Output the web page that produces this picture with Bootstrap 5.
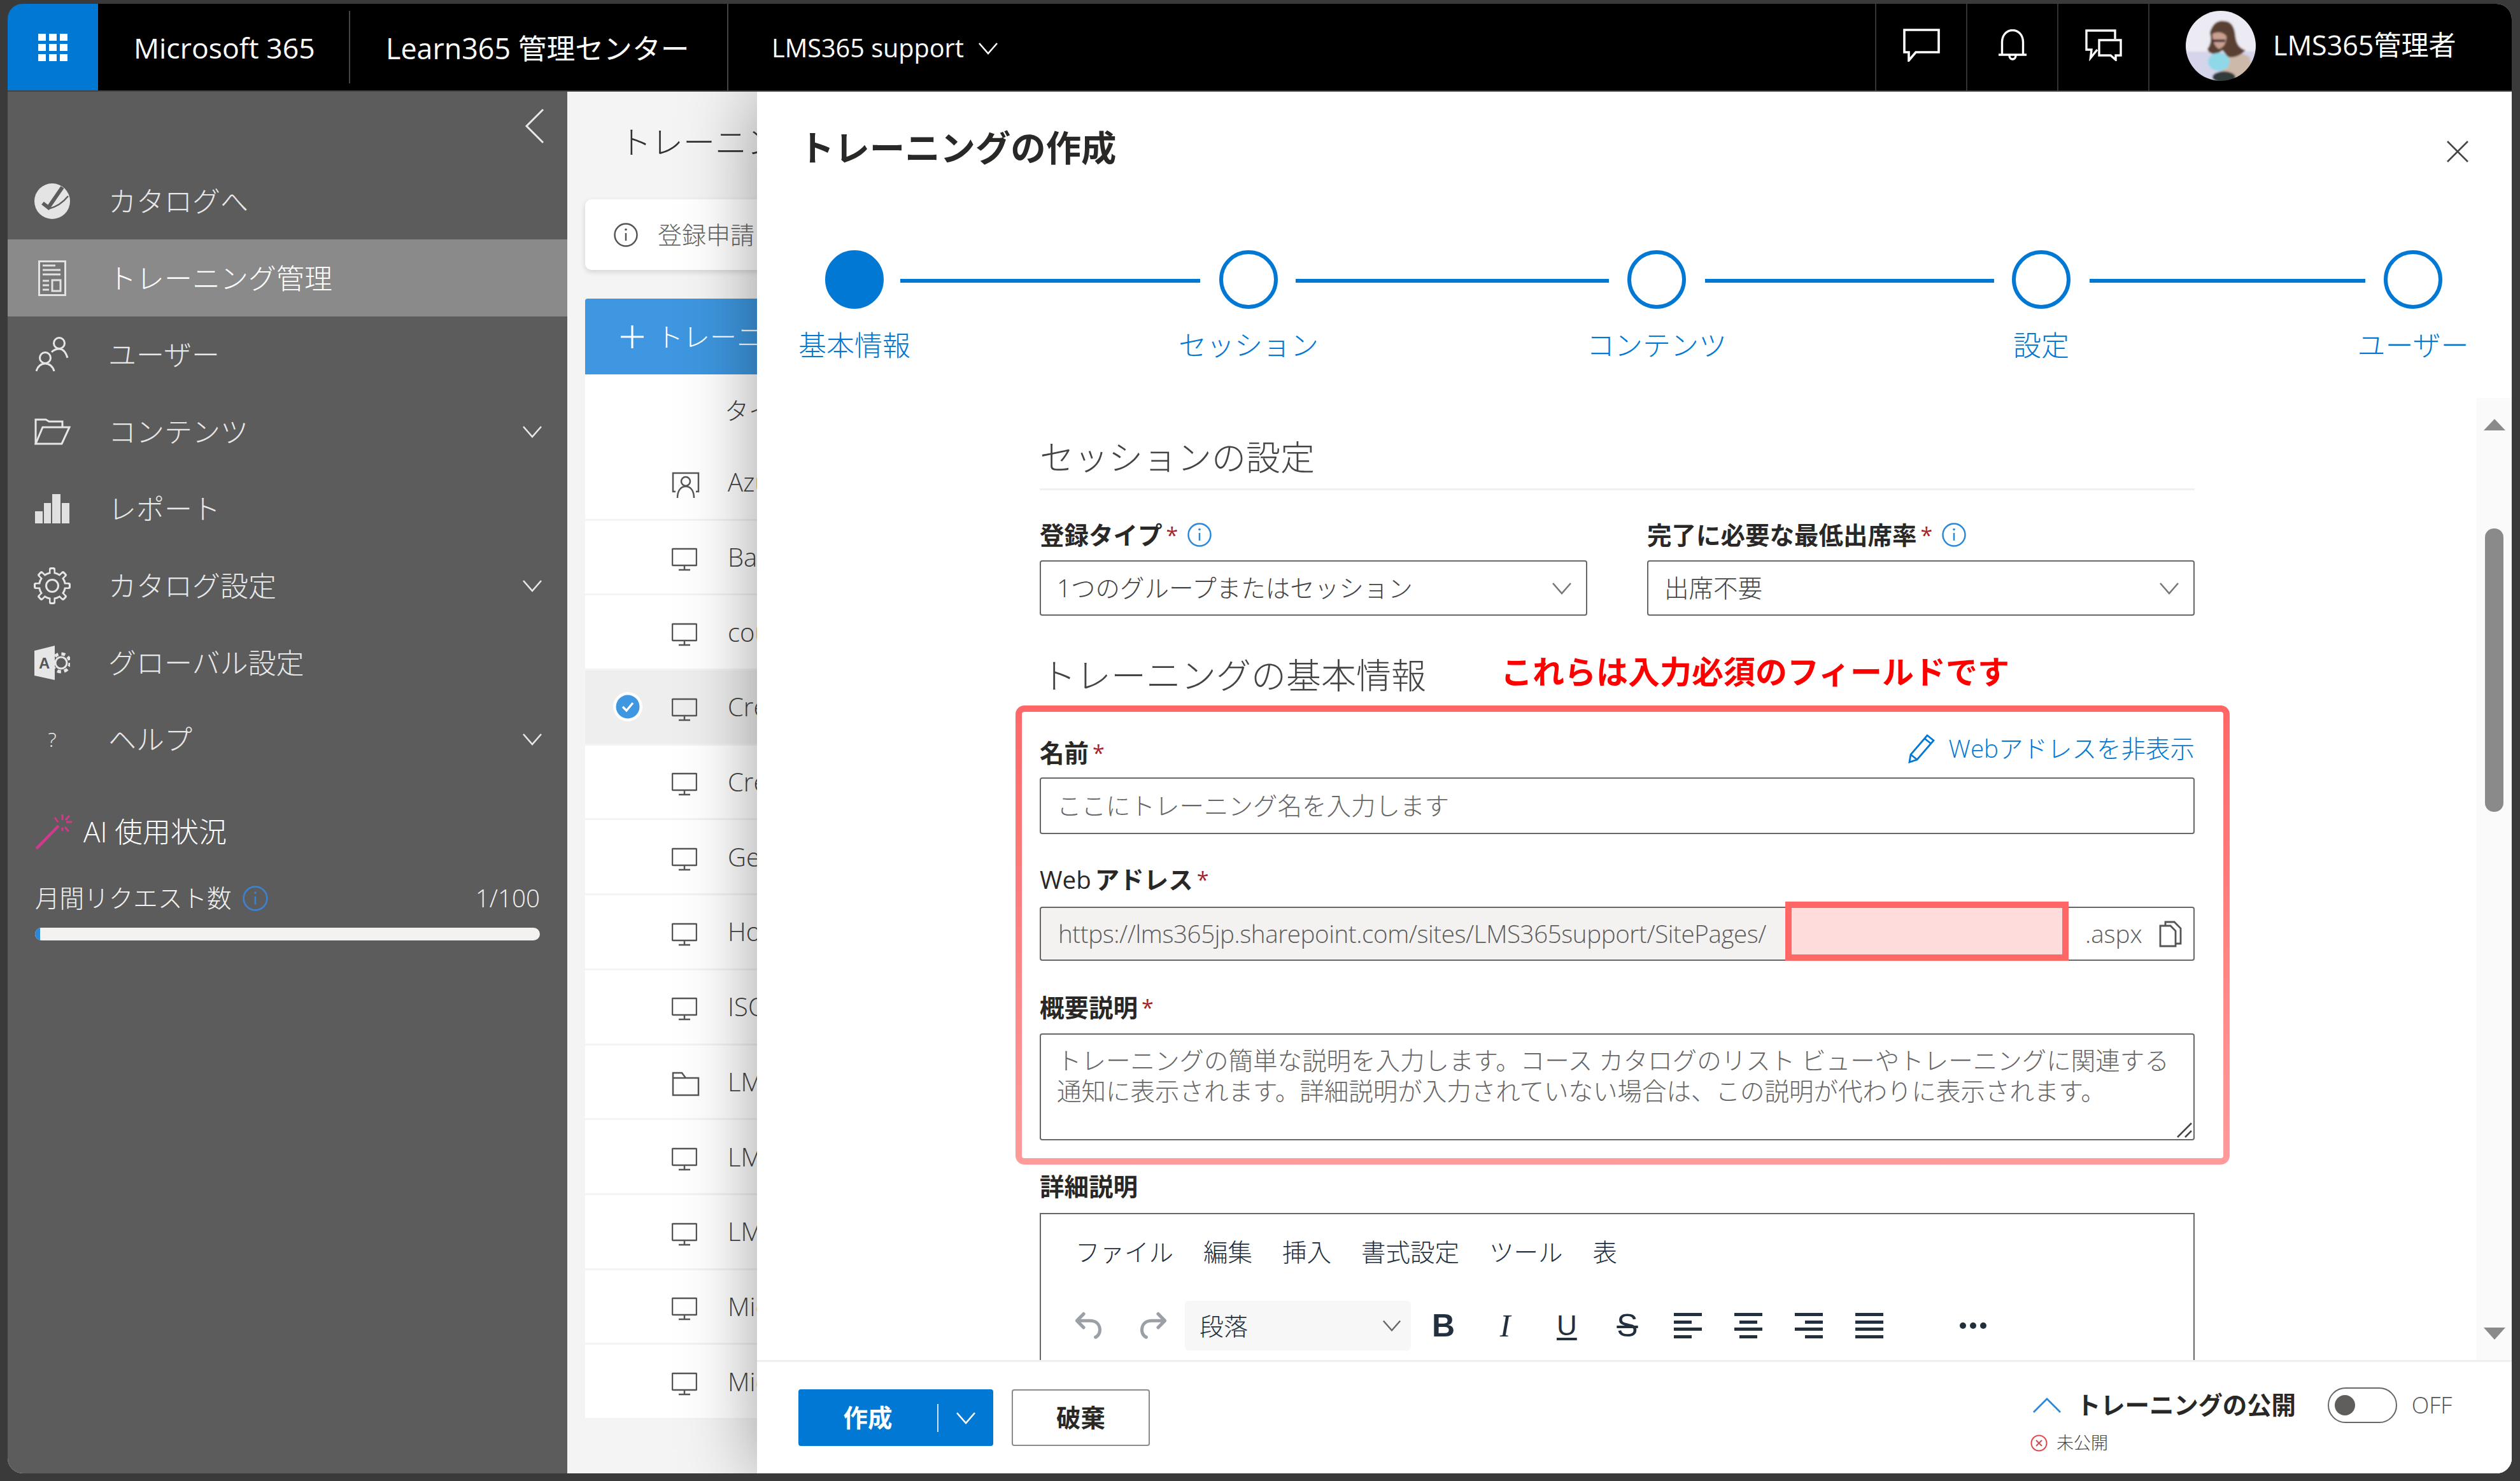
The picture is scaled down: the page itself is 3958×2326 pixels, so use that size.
<!DOCTYPE html>
<html lang="ja">
<head>
<meta charset="utf-8">
<title>トレーニングの作成</title>
<link href="https://cdn.jsdelivr.net/npm/bootstrap@5.3.0/dist/css/bootstrap.min.css" rel="stylesheet">
<style>
html,body{height:2326px;overflow:hidden;background:#3a3a3a;font-family:"Open Sans","Noto Sans CJK JP",sans-serif;color:#323130}
.frame{margin:6px 13px 0 12px;height:2308px;border-radius:24px;overflow:hidden;display:flex;flex-direction:column;background:#fff}
.shell-top{height:138px;padding:0;background:#000;color:#fff;flex-wrap:nowrap;justify-content:flex-start;align-items:stretch;border-bottom:2px solid #444;font-size:40px}
.waffle{width:142px;background:#0078d4;display:flex;align-items:center;justify-content:center}
.hcell{display:flex;align-items:center;padding-left:56px;padding-top:3px}
.hcell-a{width:396px;height:114px;align-self:center;border-right:2px solid #444;font-size:44.6px}
.hcell-b{width:594px;border-right:2px solid #444;font-size:44.8px}
.hcell-c{padding-left:68px;gap:22px;font-size:39.6px}
.hbtn{width:143px;border-left:2px solid #333;display:flex;align-items:center;justify-content:center;padding-bottom:6px}
.huser{width:571px;border-left:2px solid #333;display:flex;align-items:center;padding-left:57px;gap:27px;padding-bottom:5px;font-size:43px}
.shell-main{flex:1;display:flex;position:relative;overflow:hidden;min-height:0}
.sidebar{width:879px;background:#5c5c5c;color:#e8e8e8;flex:none}
.collapse-row{height:111.5px;display:flex;justify-content:flex-end;padding:26px 36px 0 0}
.side-nav .nav-link{height:120.8px;display:flex;align-items:center;padding:0 39px 0 40px;color:#e8e8e8;font-size:44px;font-weight:300;border-radius:0}
.side-nav .nav-link.active{background:#8a8a8a;color:#fff}
.side-ico{width:60px;flex:none;margin-right:58px;display:flex;justify-content:center}
.side-nav .chev{margin-left:auto}
.ai-head{display:flex;align-items:center;gap:15px;padding:0 0 0 44px;margin-top:44.5px;color:#fff;font-size:44px;font-weight:300;height:80px}
.ai-line{display:flex;align-items:center;padding:0 43px 0 43px;margin-top:40px;font-size:38.6px;color:#f2f2f2;height:50px;font-weight:300}
.ai-line .count{margin-left:auto}
.ai-bar{height:20px;margin:21px 43px 0 43px;background:#f3f2f1;border-radius:10px}
.ai-bar .progress-bar{background:#2b88d8}
.under{flex:1;background:#f4f4f4;padding:0 0 0 28px;min-width:0}
.under-title{height:169px;display:flex;align-items:center;padding-left:54px;font-size:50px;font-weight:300;padding-bottom:10px;white-space:nowrap}
.under-info{height:111px;background:#fff;border-radius:10px;box-shadow:0 3px 8px rgba(0,0,0,.14);display:flex;align-items:center;gap:30px;padding-left:44px;font-size:38px;color:#666;font-weight:300;white-space:nowrap}
.under-add{margin-top:45px;height:119px;border-radius:4px 0 0 0;background:#3e97e0;color:#fff;display:flex;align-items:center;gap:20px;padding-left:56px;font-size:42px;font-weight:300;white-space:nowrap}
.under-head{height:112px;background:#fff;display:flex;align-items:center;padding-left:219px;font-size:38px;font-weight:300;color:#444;white-space:nowrap}
.under-list{border-radius:0}
.under-list .list-group-item{height:117.7px;padding:0;display:flex;align-items:center;border:0;border-bottom:3px solid #f3f3f3;background:#fff;font-size:40px;font-weight:300;color:#444;white-space:nowrap}
.under-list .list-group-item.picked{background:#eeeeee}
.sel-slot{width:136px;flex:none;display:flex;justify-content:flex-end;padding-right:46px}
.row-ico{width:88px;flex:none}
.slide-panel{position:absolute;left:1177px;top:0;right:0;bottom:0;background:#fff;display:flex;flex-direction:column;box-shadow:0 0 110px rgba(0,0,0,.38)}
.panel-head{display:flex;padding:58px 68px 0 66px;height:249px}
.panel-title{font-size:55.4px;font-weight:700;line-height:60px;color:#292827}
.panel-x{margin-left:auto;margin-top:19px}
.stepper{display:flex;padding-left:107px;align-items:flex-start;height:232px;flex:none}
.step{width:92px;flex:none;display:flex;flex-direction:column;align-items:center}
.dot{width:92px;height:92px;border-radius:50%;border:6px solid #0078d4;background:#fff}
.dot.on{background:#0078d4}
.step-label{margin-top:32px;line-height:50px;font-size:44px;font-weight:300;color:#0078d4;white-space:nowrap}
.bar-line{height:6px;background:#0078d4;margin-top:45px;flex:none}
.bl1{width:471px;margin-left:26px;margin-right:30px}
.bl2{width:492px;margin-left:28px;margin-right:29px}
.bl3{width:454px;margin-left:30px;margin-right:28px}
.bl4{width:433px;margin-left:30px;margin-right:29px}
.scroll-row{flex:1;display:flex;min-height:0}
.scroll-view{flex:1;overflow:hidden;min-width:0}
.form-col{width:1814px;margin-left:444px;font-size:38.5px}
.sec-title{font-size:54px;font-weight:300;line-height:60px;color:#444;white-space:nowrap}
.sec-a{margin-top:63px;padding-bottom:19px;border-bottom:3px solid #f0f0f0}
.fld-label{line-height:50px;font-weight:700;font-size:38.5px;color:#292827;display:flex;align-items:center;gap:6px;margin:0;white-space:nowrap}
.req{color:#a4262c;font-weight:400;font-size:34px}
.two-col{display:flex;gap:94px;margin-top:45px}
.two-col>div{flex:1}
.drop{height:87px;margin-top:15px;border:2.5px solid #666;border-radius:4px;display:flex;align-items:center;padding:0 22px 0 25px;background-image:none;font-size:38.5px;font-weight:300;color:#444;justify-content:space-between}
.sec-b{margin-top:63px;display:flex;align-items:center;padding-left:2px}
.sec-b .sec-title{font-size:55px}
.must{color:#f00;font-weight:700;font-size:50px;line-height:60px;margin-left:117px;margin-top:-10px;white-space:nowrap}
.req-box{margin:18px -55px 0 -38px;padding:39px 45px 28px 28px;border:10px solid transparent;border-radius:14px;background:linear-gradient(#fff,#fff) padding-box,linear-gradient(#ff6767,#ff9b9b) border-box}
.lbl-row{display:flex;align-items:center;justify-content:space-between}
.url-toggle{color:#0078d4;display:flex;align-items:center;gap:22px;text-decoration:none;font-size:38.5px;font-weight:300;margin-top:-12px;white-space:nowrap}
.fc-name{height:89px;margin-top:14px;border:2.5px solid #666;border-radius:4px;padding:0 25px;font-size:38.5px;font-weight:300;color:#666;display:flex;align-items:center;white-space:nowrap}
.mt-web{margin-top:46px}
.mt-next{margin-top:48px}
.addr{margin-top:18px;flex-wrap:nowrap}
.addr .input-group-text{height:85px;border:2.5px solid #666;font-size:38.5px;font-weight:300;border-radius:0;color:#5c5c5c;padding:0}
.addr .prefix{width:1172px;background:#f3f2f1;border-right:0;padding-left:27px;border-radius:4px 0 0 4px;white-space:nowrap;overflow:hidden;letter-spacing:-.4px}
.addr .slug{flex:0 0 445px;width:445px;height:93px;margin:-8px 0 0 0;border:10px solid #ff6666;background:#ffdcdc;border-radius:4px;padding:0}
.addr .suffix{flex:1;background:#fff;border-left:0;padding-left:27px;gap:26px;margin-left:0;border-radius:0 4px 4px 0}
.fc-desc{position:relative;height:168px;margin-top:16px;border:2.5px solid #666;border-radius:4px;padding:16px 25px;font-size:38.5px;line-height:48px;font-weight:300;color:#666;white-space:nowrap;overflow:hidden}
.grip{position:absolute;right:2px;bottom:2px}
.detail-label{margin-top:9px}
.editor{margin-top:17px;border:2.5px solid #666;border-bottom:0;height:400px;padding-top:34px}
.edit-menu{display:flex;padding-left:54px;font-size:38.5px;font-weight:300;line-height:50px;color:#222f3e}
.edit-menu span{margin-right:47px;white-space:nowrap}
.edit-tools{display:flex;align-items:center;margin-top:52px;height:78px;padding-left:46px;color:#222f3e}
.redo{margin-left:35px}
.para{width:355px;height:78px;background:#f7f7f7;border-radius:6px;display:flex;align-items:center;justify-content:space-between;padding:0 15px 0 23px;font-size:38px;font-weight:300;margin:0 33px 0 21px}
.tb{font-family:"Liberation Sans",sans-serif;font-size:50px;line-height:78px;text-align:center;font-weight:700;color:#222f3e}
.tb-b{width:32px;margin-right:73px}
.tb-i{width:20px;margin-right:71px;font-family:"Liberation Serif",serif;font-style:italic;font-weight:400}
.tb-u{width:28px;margin-right:61px;font-weight:400;text-decoration:underline;text-decoration-thickness:4px;text-underline-offset:4px;font-size:44px}
.tb-s{width:44px;margin-right:51px;font-weight:400;text-decoration:line-through;text-decoration-thickness:4px}
.al{width:44px;margin-right:51px;flex:none}
.dots{margin-left:68px}
.sbar{width:55px;flex:none;background:#fafafa;display:flex;flex-direction:column;align-items:center;padding:33px 0 32px}
.arr-up,.arr-down{width:0;height:0;border-left:17px solid transparent;border-right:17px solid transparent}
.arr-up{border-bottom:18px solid #8a8a8a}
.arr-down{border-top:19px solid #8a8a8a;margin-top:auto}
.thumb-v{width:29px;height:445px;margin-top:154px;background:#8a8a8a;border-radius:14px}
.panel-foot{height:178px;flex:none;border-top:3px solid #eee;display:flex;padding-left:65px;background:#fff}
.btn-make{height:89px;width:306px;margin-top:43px;padding:0;background:#0078d4;border:0;color:#fff;border-radius:4px;display:flex;align-items:center;font-size:38.5px;font-weight:700}
.btn-make .lab{width:218px;text-align:center}
.btn-make .sep{width:2px;height:44px;background:#cfe4f6}
.btn-make .cv{flex:1;display:flex;justify-content:center}
.btn-drop{height:89px;width:217px;margin:43px 0 0 29px;padding:0;background:#fff;border:2.5px solid #8a8a8a;color:#292827;border-radius:4px;font-size:38.5px;font-weight:700}
.pub{margin-left:auto;width:756px;padding-top:40px;flex:none}
.pub-a{display:flex;align-items:center;height:56px;padding-left:4px}
.pub-t{font-size:38.5px;font-weight:700;margin-left:24px;color:#292827;white-space:nowrap;letter-spacing:-.2px}
.tgl{width:109px;height:56px;border:2.5px solid #666;border-radius:28px;margin-left:50px;display:flex;align-items:center;padding-left:9px}
.tgl i{width:32px;height:32px;border-radius:50%;background:#605e5c;display:block}
.off{margin-left:23px;font-size:36px;font-weight:300;color:#555}
.pub-b{display:flex;align-items:center;gap:14px;margin-top:14px;font-size:27px;font-weight:300;line-height:34px;color:#444}
</style>
</head>
<body>
<svg width="0" height="0" class="position-absolute">
  <symbol id="mon" viewBox="0 0 40 40"><rect x="1" y="3" width="38" height="26" rx="1" fill="none" stroke="#555" stroke-width="2.5"/><path d="M20 29v6M11 36h18" stroke="#555" stroke-width="2.5"/></symbol>
  <symbol id="info" viewBox="0 0 40 40"><circle cx="20" cy="20" r="17.5" fill="none" stroke="currentColor" stroke-width="2.5"/><path d="M20 17v12" stroke="currentColor" stroke-width="2.5"/><circle cx="20" cy="11.5" r="1.8" fill="currentColor"/></symbol>
  <symbol id="cvd" viewBox="0 0 32 20"><path d="M2 2l14 16L30 2" fill="none" stroke="currentColor" stroke-width="2.6"/></symbol>
  <g id="teeth-out"><rect x="24" y="0" width="10" height="13" rx="3"/></g>
  <g id="teeth-in"><rect x="26.5" y="3" width="5" height="12" rx="1.5"/></g>
</svg>
<div class="frame">
  <nav class="navbar shell-top">
    <div class="waffle"><svg width="46" height="43" viewBox="0 0 46 43" fill="#fff"><rect width="12" height="11"/><rect x="17" width="12" height="11"/><rect x="34" width="12" height="11"/><rect y="16" width="12" height="11"/><rect x="17" y="16" width="12" height="11"/><rect x="34" y="16" width="12" height="11"/><rect y="32" width="12" height="11"/><rect x="17" y="32" width="12" height="11"/><rect x="34" y="32" width="12" height="11"/></svg></div>
    <div class="hcell hcell-a">Microsoft 365</div>
    <div class="hcell hcell-b">Learn365 管理センター</div>
    <div class="hcell hcell-c">LMS365 support <svg width="32" height="20" class="text-white"><use href="#cvd"/></svg></div>
    <div class="hbtn ms-auto"><svg width="58" height="52" viewBox="0 0 58 52" fill="none" stroke="#fff" stroke-width="3.6"><path d="M2 2H56V37H20L9 50V37H2Z"/></svg></div>
    <div class="hbtn"><svg width="44" height="50" viewBox="0 0 44 50" fill="none" stroke="#fff" stroke-width="3.4"><path d="M5.5 40V20C5.5 10 12 1.5 22 1.5S38.500 10 38.500 20V40"/><path d="M0 40H44"/><path d="M17 41c0 8 10 8 10 0"/></svg></div>
    <div class="hbtn"><svg width="58" height="50" viewBox="0 0 58 50" fill="none" stroke="#fff" stroke-width="3.4"><path d="M47 15V2H2V32H10L8.500 45L19 32"/><path d="M22 17H56V41H48V48L40 41H22Z"/></svg></div>
    <div class="huser">
      <svg width="110" height="110" viewBox="0 0 110 110"><defs><clipPath id="av"><circle cx="55" cy="55" r="55"/></clipPath><filter id="soft"><feGaussianBlur stdDeviation="1.6"/></filter></defs><g clip-path="url(#av)"><g filter="url(#soft)"><rect x="-5" y="-5" width="120" height="120" fill="#eceaf2"/><rect x="-5" y="64" width="120" height="50" fill="#d4d4ea"/><path d="M50 114L62 68Q80 62 100 72L112 114Z" fill="#cdb9aa"/><path d="M38 34Q44 14 60 16Q76 16 78 40Q80 58 94 62Q80 76 66 72L58 62L48 68Q36 68 34 60Q42 50 38 34Z" fill="#5a3f30"/><path d="M42 36Q56 30 64 40Q64 56 52 60Q42 54 42 36Z" fill="#c99f90"/><path d="M42 47H62" stroke="#3d2230" stroke-width="4"/><ellipse cx="52" cy="80" rx="17" ry="14" fill="#8fd8e8"/><ellipse cx="60" cy="104" rx="18" ry="9" fill="#333a3a"/></g></g></svg>
      <span>LMS365管理者</span>
    </div>
  </nav>
  <div class="shell-main">
    <aside class="sidebar">
      <div class="collapse-row"><svg width="32" height="56" viewBox="0 0 32 56" fill="none" stroke="#e8e8e8" stroke-width="3"><path d="M30 2L4 28l26 26"/></svg></div>
      <div class="nav flex-column side-nav">
        <a class="nav-link"><span class="side-ico"><svg width="56" height="56" viewBox="0 0 56 56"><circle cx="28" cy="28" r="28" fill="#e4e4e4"/><path d="M13 31l9 7L44 6" fill="none" stroke="#5c5c5c" stroke-width="6"/><path d="M22 40Q40 36 53 20" fill="none" stroke="#5c5c5c" stroke-width="2.4"/></svg></span>カタログへ</a>
        <a class="nav-link active"><span class="side-ico"><svg width="44" height="56" viewBox="0 0 44 56" fill="#777" stroke="#e2e2e2"><rect x="1.500" y="1.500" width="41" height="53" stroke-width="3"/><path d="M7 8h20M7 15h28M7 22h28M7 32h10M7 39h10M7 46h10" stroke-width="3"/><rect x="22" y="31" width="13" height="17" stroke-width="3"/></svg></span>トレーニング管理</a>
        <a class="nav-link"><span class="side-ico"><svg width="52" height="56" viewBox="0 0 52 56" fill="none" stroke="#e6e6e6" stroke-width="3"><circle cx="37" cy="10" r="8.500"/><circle cx="15" cy="33" r="8.500"/><path d="M1 54C3 46 9 42 15 42S27 46 29 54M25 24C29 20 33 19 37 19 43 19 47 23 50 33"/></svg></span>ユーザー</a>
        <a class="nav-link"><span class="side-ico"><svg width="57" height="42" viewBox="0 0 57 42" fill="none" stroke="#e6e6e6" stroke-width="3"><path d="M2 40V2H18L23 5H44V14"/><path d="M2 40H43L55 14H13Z"/></svg></span>コンテンツ<svg class="chev" width="32" height="20"><use href="#cvd"/></svg></a>
        <a class="nav-link"><span class="side-ico"><svg width="54" height="46" viewBox="0 0 54 46" fill="#e0e0e0"><rect y="27" width="12" height="19"/><rect x="14" y="14" width="11" height="32"/><rect x="27" width="13" height="46"/><rect x="42" y="14" width="12" height="32"/></svg></span>レポート</a>
        <a class="nav-link"><span class="side-ico"><svg width="58" height="58" viewBox="0 0 58 58"><g fill="#e6e6e6"><circle cx="29" cy="29" r="22"/><use href="#teeth-out" transform="rotate(0 29 29)"/><use href="#teeth-out" transform="rotate(45 29 29)"/><use href="#teeth-out" transform="rotate(90 29 29)"/><use href="#teeth-out" transform="rotate(135 29 29)"/><use href="#teeth-out" transform="rotate(180 29 29)"/><use href="#teeth-out" transform="rotate(225 29 29)"/><use href="#teeth-out" transform="rotate(270 29 29)"/><use href="#teeth-out" transform="rotate(315 29 29)"/></g><g fill="#5c5c5c"><circle cx="29" cy="29" r="19"/><use href="#teeth-in" transform="rotate(0 29 29)"/><use href="#teeth-in" transform="rotate(45 29 29)"/><use href="#teeth-in" transform="rotate(90 29 29)"/><use href="#teeth-in" transform="rotate(135 29 29)"/><use href="#teeth-in" transform="rotate(180 29 29)"/><use href="#teeth-in" transform="rotate(225 29 29)"/><use href="#teeth-in" transform="rotate(270 29 29)"/><use href="#teeth-in" transform="rotate(315 29 29)"/></g><circle cx="29" cy="29" r="9.500" fill="none" stroke="#e6e6e6" stroke-width="3"/></svg></span>カタログ設定<svg class="chev" width="32" height="20"><use href="#cvd"/></svg></a>
        <a class="nav-link"><span class="side-ico"><svg width="56" height="54" viewBox="0 0 56 54"><circle cx="42" cy="27" r="9" fill="none" stroke="#e6e6e6" stroke-width="3"/><circle cx="42" cy="27" r="14" fill="none" stroke="#e6e6e6" stroke-width="5" stroke-dasharray="6 5"/><path d="M0 8L32 0V54L0 47Z" fill="#e6e6e6"/><text x="7" y="36" font-family="Liberation Sans" font-weight="700" font-size="24" fill="#555">A</text></svg></span>グローバル設定</a>
        <a class="nav-link"><span class="side-ico fs-2">?</span>ヘルプ<svg class="chev" width="32" height="20"><use href="#cvd"/></svg></a>
      </div>
      <div class="ai-head"><svg width="60" height="56" viewBox="0 0 60 56" fill="none" stroke="#d13a8c" stroke-width="3"><path d="M1 55L36 19" stroke-width="4.500"/><path d="M42 1v9M57 13h-9M30 6l5 7M53 3l-6 7M52 28l-6-7M42 27v-5"/></svg><span>AI 使用状況</span></div>
      <div class="ai-line"><span>月間リクエスト数</span><svg class="ms-3" width="42" height="42" style="color:#3b82d0"><use href="#info"/></svg><span class="count">1/100</span></div>
      <div class="progress ai-bar"><div class="progress-bar" style="width:1%"></div></div>
    </aside>
    <section class="under">
      <div class="under-title">トレーニン</div>
      <div class="under-info"><svg width="40" height="40" style="color:#555"><use href="#info"/></svg>登録申請</div>
      <div class="under-add"><svg width="36" height="36" viewBox="0 0 36 36" stroke="#fff" stroke-width="3.200"><path d="M18 0v36M0 18h36"/></svg>トレーニ</div>
      <div class="under-head">タイ</div>
      <div class="list-group under-list">
        <div class="list-group-item"><span class="sel-slot"></span><span class="row-ico"><svg width="44" height="44" viewBox="0 0 44 44" fill="none" stroke="#555" stroke-width="2.500"><path d="M6 32H2V3h40v29h-4"/><circle cx="22" cy="16" r="7"/><path d="M9 42c0-11 5-18 13-18s13 7 13 18"/></svg></span>Azu</div>
        <div class="list-group-item"><span class="sel-slot"></span><span class="row-ico"><svg width="40" height="40"><use href="#mon"/></svg></span>Bar</div>
        <div class="list-group-item"><span class="sel-slot"></span><span class="row-ico"><svg width="40" height="40"><use href="#mon"/></svg></span>cou</div>
        <div class="list-group-item picked"><span class="sel-slot"><svg width="46" height="46" viewBox="0 0 46 46"><circle cx="23" cy="23" r="23" fill="#fff"/><circle cx="23" cy="23" r="18.500" fill="#3e97e0"/><path d="M15 23l6 6 10-12" fill="none" stroke="#fff" stroke-width="3.400"/></svg></span><span class="row-ico"><svg width="40" height="40"><use href="#mon"/></svg></span>Cre</div>
        <div class="list-group-item"><span class="sel-slot"></span><span class="row-ico"><svg width="40" height="40"><use href="#mon"/></svg></span>Cre</div>
        <div class="list-group-item"><span class="sel-slot"></span><span class="row-ico"><svg width="40" height="40"><use href="#mon"/></svg></span>Ge</div>
        <div class="list-group-item"><span class="sel-slot"></span><span class="row-ico"><svg width="40" height="40"><use href="#mon"/></svg></span>Ho</div>
        <div class="list-group-item"><span class="sel-slot"></span><span class="row-ico"><svg width="40" height="40"><use href="#mon"/></svg></span>ISO</div>
        <div class="list-group-item"><span class="sel-slot"></span><span class="row-ico"><svg width="44" height="40" viewBox="0 0 44 40" fill="none" stroke="#555" stroke-width="2.500"><path d="M2 37V2h14l6 8h20v27ZM2 10h20"/></svg></span>LM</div>
        <div class="list-group-item"><span class="sel-slot"></span><span class="row-ico"><svg width="40" height="40"><use href="#mon"/></svg></span>LM</div>
        <div class="list-group-item"><span class="sel-slot"></span><span class="row-ico"><svg width="40" height="40"><use href="#mon"/></svg></span>LM</div>
        <div class="list-group-item"><span class="sel-slot"></span><span class="row-ico"><svg width="40" height="40"><use href="#mon"/></svg></span>Mic</div>
        <div class="list-group-item"><span class="sel-slot"></span><span class="row-ico"><svg width="40" height="40"><use href="#mon"/></svg></span>Mic</div>
      </div>
    </section>
    <section class="slide-panel">
      <div class="panel-head">
        <div class="panel-title">トレーニングの作成</div>
        <svg class="panel-x" width="34" height="34" viewBox="0 0 34 34" stroke="#444" stroke-width="2.600"><path d="M1 1l32 32M33 1L1 33"/></svg>
      </div>
      <div class="stepper">
        <div class="step"><div class="dot on"></div><div class="step-label">基本情報</div></div>
        <div class="bar-line bl1"></div>
        <div class="step"><div class="dot"></div><div class="step-label">セッション</div></div>
        <div class="bar-line bl2"></div>
        <div class="step"><div class="dot"></div><div class="step-label">コンテンツ</div></div>
        <div class="bar-line bl3"></div>
        <div class="step"><div class="dot"></div><div class="step-label">設定</div></div>
        <div class="bar-line bl4"></div>
        <div class="step"><div class="dot"></div><div class="step-label">ユーザー</div></div>
      </div>
      <div class="scroll-row">
        <div class="scroll-view">
          <div class="form-col">
            <div class="sec-title sec-a">セッションの設定</div>
            <div class="two-col">
              <div>
                <label class="fld-label">登録タイプ<span class="req">*</span><svg class="ms-2" width="40" height="40" style="color:#2b88d8"><use href="#info"/></svg></label>
                <div class="form-select drop"><span>1つのグループまたはセッション</span><svg width="32" height="20" style="color:#777"><use href="#cvd"/></svg></div>
              </div>
              <div>
                <label class="fld-label">完了に必要な最低出席率<span class="req">*</span><svg class="ms-2" width="40" height="40" style="color:#2b88d8"><use href="#info"/></svg></label>
                <div class="form-select drop"><span>出席不要</span><svg width="32" height="20" style="color:#777"><use href="#cvd"/></svg></div>
              </div>
            </div>
            <div class="sec-b"><span class="sec-title">トレーニングの基本情報</span><span class="must">これらは入力必須のフィールドです</span></div>
            <div class="req-box">
              <div class="lbl-row">
                <label class="fld-label">名前<span class="req">*</span></label>
                <a class="url-toggle"><svg width="42" height="46" viewBox="0 0 42 46" fill="none" stroke="#0078d4" stroke-width="2.800"><path d="M30 2l10 8L14 40 2 44l2-12Z"/><path d="M26 7l10 8M4 32l10 8"/></svg>Webアドレスを非表示</a>
              </div>
              <div class="form-control fc-name">ここにトレーニング名を入力します</div>
              <label class="fld-label mt-web"><span class="fw-normal">Web</span> アドレス<span class="req">*</span></label>
              <div class="input-group addr">
                <span class="input-group-text prefix">https://lms365jp.sharepoint.com/sites/LMS365support/SitePages/</span>
                <input class="form-control slug" type="text" aria-label="URL">
                <span class="input-group-text suffix">.aspx<svg width="36" height="42" viewBox="0 0 36 42" fill="none" stroke="#555" stroke-width="2.800"><path d="M10 8V2h14l10 10v24h-8"/><path d="M2 8h16l8 8v24H2Z"/></svg></span>
              </div>
              <label class="fld-label mt-next">概要説明<span class="req">*</span></label>
              <div class="form-control fc-desc">トレーニングの簡単な説明を入力します。コース カタログのリスト ビューやトレーニングに関連する<br>通知に表示されます。詳細説明が入力されていない場合は、この説明が代わりに表示されます。
                <svg class="grip" width="26" height="26" viewBox="0 0 26 26" stroke="#444" stroke-width="2.600"><path d="M3 25L25 3M15 25L25 15"/></svg>
              </div>
            </div>
            <label class="fld-label detail-label">詳細説明</label>
            <div class="editor">
              <div class="edit-menu"><span>ファイル</span><span>編集</span><span>挿入</span><span>書式設定</span><span>ツール</span><span>表</span></div>
              <div class="edit-tools">
                <svg width="62" height="62" viewBox="0 0 24 24" fill="#9aa0a6"><path d="M6.400 8H12c3.700 0 6.200 2 6.800 5.100.6 2.700-.4 5.600-2.900 6.800a1 1 0 0 1-1-1.800c1.700-.8 2.400-2.800 2-4.600C16.600 11.300 14.800 10 12 10H6.400l2.300 2.300a1 1 0 1 1-1.400 1.400l-4-4a1 1 0 0 1 0-1.400l4-4a1 1 0 1 1 1.400 1.400L6.400 8z"/></svg>
                <svg width="62" height="62" viewBox="0 0 24 24" fill="#9aa0a6" class="redo"><g transform="translate(24 0) scale(-1 1)"><path d="M6.400 8H12c3.700 0 6.200 2 6.800 5.100.6 2.700-.4 5.600-2.900 6.800a1 1 0 0 1-1-1.800c1.700-.8 2.400-2.800 2-4.600C16.600 11.300 14.800 10 12 10H6.400l2.300 2.300a1 1 0 1 1-1.400 1.400l-4-4a1 1 0 0 1 0-1.400l4-4a1 1 0 1 1 1.400 1.400L6.400 8z"/></g></svg>
                <div class="para"><span>段落</span><svg width="30" height="20" style="color:#666"><use href="#cvd"/></svg></div>
                <span class="tb tb-b">B</span><span class="tb tb-i">I</span><span class="tb tb-u">U</span><span class="tb tb-s">S</span>
                <svg class="al" viewBox="0 0 44 40" height="40" fill="#222f3e"><rect width="44" height="5"/><rect y="12" width="28" height="5"/><rect y="23" width="44" height="5"/><rect y="35" width="28" height="5"/></svg>
                <svg class="al" viewBox="0 0 44 40" height="40" fill="#222f3e"><rect width="44" height="5"/><rect x="8" y="12" width="28" height="5"/><rect y="23" width="44" height="5"/><rect x="8" y="35" width="28" height="5"/></svg>
                <svg class="al" viewBox="0 0 44 40" height="40" fill="#222f3e"><rect width="44" height="5"/><rect x="16" y="12" width="28" height="5"/><rect y="23" width="44" height="5"/><rect x="16" y="35" width="28" height="5"/></svg>
                <svg class="al" viewBox="0 0 44 40" height="40" fill="#222f3e"><rect width="44" height="5"/><rect y="12" width="44" height="5"/><rect y="23" width="44" height="5"/><rect y="35" width="44" height="5"/></svg>
                <svg class="dots" width="44" height="10" viewBox="0 0 44 10" fill="#222f3e"><circle cx="6" cy="5" r="5"/><circle cx="22" cy="5" r="5"/><circle cx="38" cy="5" r="5"/></svg>
              </div>
            </div>
          </div>
        </div>
        <div class="sbar"><div class="arr-up"></div><div class="thumb-v"></div><div class="arr-down"></div></div>
      </div>
      <div class="panel-foot">
        <button class="btn btn-make" type="button"><span class="lab">作成</span><span class="sep"></span><span class="cv"><svg width="34" height="20"><use href="#cvd"/></svg></span></button>
        <button class="btn btn-drop" type="button">破棄</button>
        <div class="pub">
          <div class="pub-a"><svg width="44" height="24" viewBox="0 0 44 24" fill="none" stroke="#2b88d8" stroke-width="2.800"><path d="M1 23L22 2l21 21"/></svg><span class="pub-t">トレーニングの公開</span><div class="tgl"><i></i></div><span class="off">OFF</span></div>
          <div class="pub-b"><svg width="27" height="27" viewBox="0 0 27 27" fill="none" stroke="#e0474c" stroke-width="2"><circle cx="13.500" cy="13.500" r="12"/><path d="M9 9l9 9M18 9l-9 9"/></svg><span>未公開</span></div>
        </div>
      </div>
    </section>
  </div>
</div>
<script src="https://cdn.jsdelivr.net/npm/bootstrap@5.3.0/dist/js/bootstrap.bundle.min.js"></script>
</body>
</html>
